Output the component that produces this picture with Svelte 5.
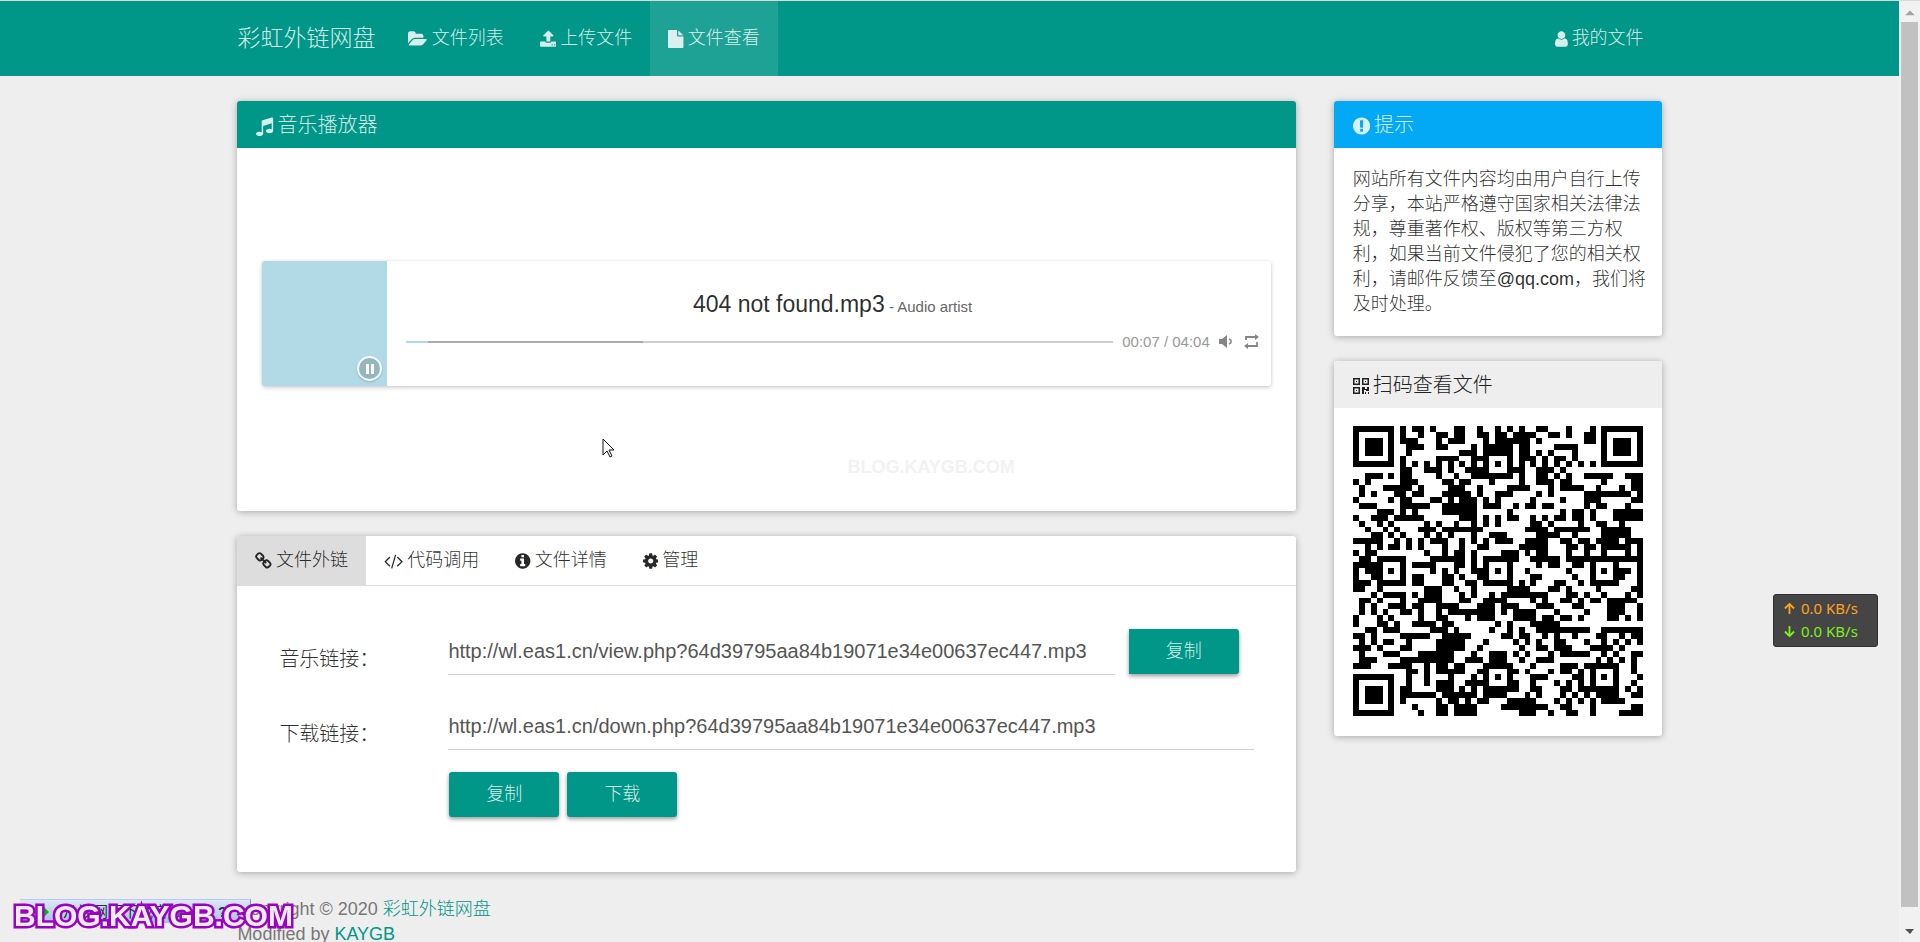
<script>
  const icons = {
    folder: { box: '0 0 1920 1792', d: 'M1879 952q0 31-31 66l-336 396q-43 51-120.5 86.5t-143.5 35.5h-1088q-34 0-60.5-13t-26.5-43q0-31 31-66l336-396q43-51 120.5-86.5t143.5-35.5h1088q34 0 60.5 13t26.5 43zm-343-344v160h-832q-94 0-197 47.5t-164 119.5l-337 396-5 6q0-4-.5-12.5t-.5-12.5v-960q0-92 66-158t158-66h320q92 0 158 66t66 158v32h544q92 0 158 66t66 158z' },
    upload: { box: '64 0 1664 1792', d: 'M1344 1472q0-26-19-45t-45-19-45 19-19 45 19 45 45 19 45-19 19-45zm256 0q0-26-19-45t-45-19-45 19-19 45 19 45 45 19 45-19 19-45zm128-224v320q0 40-28 68t-68 28h-1472q-40 0-68-28t-28-68v-320q0-40 28-68t68-28h427q21 56 70.5 92t110.5 36h256q61 0 110.5-36t70.5-92h427q40 0 68 28t28 68zm-325-648q-17 40-59 40h-256v448q0 26-19 45t-45 19h-256q-26 0-45-19t-19-45v-448h-256q-42 0-59-40-17-39 14-69l448-448q18-19 45-19t45 19l448 448q31 30 14 69z' },
    file: { box: '128 0 1536 1792', d: 'M1152 512v-472q22 14 36 28l408 408q14 14 28 36h-472zm-128 32q0 40 28 68t68 28h544v1056q0 40-28 68t-68 28h-1344q-40 0-68-28t-28-68v-1600q0-40 28-68t68-28h800v544z' },
    user: { box: '256 0 1280 1792', d: 'M1536 1399q0 109-62.5 187t-150.5 78h-854q-88 0-150.5-78t-62.5-187q0-85 8.5-160.5t31.5-152 58.5-131 94-89 134.5-34.5q131 128 313 128t313-128q76 0 134.5 34.5t94 89 58.5 131 31.5 152 8.5 160.5zm-256-887q0 159-112.5 271.5t-271.5 112.5-271.5-112.5-112.5-271.5 112.5-271.5 271.5-112.5 271.5 112.5 112.5 271.5z' },
    music: { box: '128 0 1536 1792', d: 'M1664 224v1120q0 50-34 89t-86 60.5-103.5 32-96.5 10.5-96.5-10.5-103.5-32-86-60.5-34-89 34-89 86-60.5 103.5-32 96.5-10.5q105 0 192 39v-537l-768 237v709q0 50-34 89t-86 60.5-103.5 32-96.5 10.5-96.5-10.5-103.5-32-86-60.5-34-89 34-89 86-60.5 103.5-32 96.5-10.5q105 0 192 39v-967q0-31 19-56.5t49-35.5l832-256q12-4 28-4 40 0 68 28t28 68z' },
    alert: { box: '128 0 1536 1792', d: 'M896 128q209 0 385.5 103t279.5 279.5 103 385.5-103 385.5-279.5 279.5-385.5 103-385.5-103-279.5-279.5-103-385.5 103-385.5 279.5-279.5 385.5-103zm128 1247v-190q0-14-9-23.5t-22-9.5h-192q-13 0-23 10t-10 23v190q0 13 10 23t23 10h192q13 0 22-9.5t9-23.5zm-2-344l18-621q0-12-10-18-10-8-24-8h-220q-14 0-24 8-10 6-10 18l17 621q0 10 10 17.5t24 7.5h185q14 0 23.5-7.5t10.5-17.5z' },
    info: { box: '128 0 1536 1792', d: 'M1152 1376v-160q0-14-9-23t-23-9h-96v-512q0-14-9-23t-23-9h-320q-14 0-23 9t-9 23v160q0 14 9 23t23 9h96v320h-96q-14 0-23 9t-9 23v160q0 14 9 23t23 9h448q14 0 23-9t9-23zm-128-896v-160q0-14-9-23t-23-9h-192q-14 0-23 9t-9 23v160q0 14 9 23t23 9h192q14 0 23-9t9-23zm640 416q0 209-103 385.5t-279.5 279.5-385.5 103-385.5-103-279.5-279.5-103-385.5 103-385.5 279.5-279.5 385.5-103 385.5 103 279.5 279.5 103 385.5z' },
    cog: { box: '128 0 1536 1792', d: 'M1152 896q0-106-75-181t-181-75-181 75-75 181 75 181 181 75 181-75 75-181zm512-109v222q0 12-8 23t-20 13l-185 28q-19 54-39 91 35 50 107 138 10 12 10 25t-9 23q-27 37-99 108t-94 71q-12 0-26-9l-138-108q-44 23-91 38-16 136-29 186-7 28-36 28h-222q-14 0-24.5-8.5t-11.5-21.5l-28-184q-49-16-90-37l-141 107q-10 9-25 9-14 0-25-11-126-114-165-168-7-10-7-23 0-12 8-23 15-21 51-66.5t54-70.5q-27-50-41-99l-183-27q-13-2-21-12.5t-8-23.5v-222q0-12 8-23t19-13l186-28q14-46 39-92-40-57-107-138-10-12-10-24 0-10 9-23 26-36 98.5-107.5t94.5-71.5q13 0 26 10l138 107q44-23 91-38 16-136 29-186 7-28 36-28h222q14 0 24.5 8.5t11.5 21.5l28 184q49 16 90 37l142-107q9-9 24-9 13 0 25 10 129 119 165 170 7 8 7 22 0 12-8 23-15 21-51 66.5t-54 70.5q26 50 41 98l183 28q13 2 21 12.5t8 23.5z' },
    link: { box: '64 0 1664 1792', d: 'M1520 1216q0-40-28-68l-208-208q-28-28-68-28-42 0-72 32 3 3 19 18.5t21.5 21.5 15 19 13 25.5 3.5 27.5q0 40-28 68t-68 28q-15 0-27.5-3.5t-25.5-13-19-15-21.5-21.5-18.5-19q-33 31-33 73 0 40 28 68l206 207q27 27 68 27 40 0 68-26l147-146q28-28 28-67zm-703-705q0-40-28-68l-206-207q-28-28-68-28-39 0-68 27l-147 146q-28 28-28 67 0 40 28 68l208 208q27 27 68 27 42 0 72-31-3-3-19-18.5t-21.5-21.5-15-19-13-25.5-3.5-27.5q0-40 28-68t68-28q15 0 27.5 3.5t25.5 13 19 15 21.5 21.5 18.5 19q33-31 33-73zm895 705q0 120-85 203l-147 146q-83 83-203 83-121 0-204-85l-206-207q-83-83-83-203 0-123 88-209l-88-88q-86 88-208 88-120 0-204-84l-208-208q-84-84-84-204t85-203l147-146q83-83 203-83 121 0 204 85l206 207q83 83 83 203 0 123-88 209l88 88q86-88 208-88 120 0 204 84l208 208q84 84 84 204z' },
    code: { box: '0 0 1920 1792', d: 'M617 1399l-50 50q-10 10-23 10t-23-10l-466-466q-10-10-10-23t10-23l466-466q10-10 23-10t23 10l50 50q10 10 10 23t-10 23l-393 393 393 393q10 10 10 23t-10 23zm591-1067l-373 1291q-4 13-15.500 19.500t-23.500 2.500l-62-17q-13-4-19.500-15.500t-2.500-24.500l373-1291q4-13 15.500-19.500t23.500-2.500l62 17q13 4 19.500 15.500t2.500 24.500zm657 651l-466 466q-10 10-23 10t-23-10l-50-50q-10-10-10-23t10-23l393-393-393-393q-10-10-10-23t10-23l50-50q10-10 23-10t23 10l466 466q10 10 10 23t-10 23z' }
  };

  const tabs = [
    ['link', '文件外链'],
    ['code', '代码调用'],
    ['info', '文件详情'],
    ['cog', '管理']
  ];
  let active = $state(0);

  // Dark module runs of the code's data area, one string per row.
  const rows = [
    '8,10-11,13,17-18,21,24,26,28,31-32,36,40',
    '8,11,14-15,17-18,21-22,24-25,27-30,33-34,36,39-40',
    '8-10,14,16-18,22,24-29,31,39-40',
    '9-11,14-15,20,22-26,28-29,34-37',
    '9,18-20,22-26,28-29,31,33,37',
    '8,14-17,20-22,26,28-30,32,34-35,37',
    '',
    '8-9,12-14,16,19-22,26-28,31-33,35',
    '2-4,6,8-9,14,17,20-26,28,31-32,34,36,39-43,46-48',
    '0,2,6,8-10,15-16,18-19,23,28,31-33,35-36,42,47-48',
    '1,5-9,11,16-18,21,26-29,33,35-38,41,45,47-48',
    '1,3,7-8,10-11,15-19,21,24-26,31,33,39-46,48',
    '0,6,8-9,13-14,16,18-20,22,24,30,35,39-41,47-48',
    '1-3,8-12,15-20,22-24,27,29-30,32-33,39,41-42,46',
    '4-6,8,10,15-20,26,35,37-38,40,44-48',
    '0,3-5,7-11,18-20,22,24,26-27,30,32,34-35,37-38,40,44-48',
    '1,4,6,12,14,17,20,22,24,30-31,33,38,41-42,45',
    '2,5,7,11-13,15-21,29-32,34-39,42-46',
    '3-4,6,8,12,14,16,20,23-25,31-34,37,42-46',
    '0-4,7,9,11,13-15,18,20,22,24-26,29-32,35-36,38-39,41-44,46-48',
    '2,4,7,9,11,15,18,21-22,28-32,36-37,39-40,42-46,48',
    '0,2-3,12,15,17-18,20,25-27,29,31-32,36,39,42,46,48',
    '1-2,4-8,13-18,20,22-27,30-34,36-48',
    '0-3,10-13,17-18,20,31,33-34,37-38,48',
    '0,2-3,13,15,17,20-21,29,36,45-46,48',
    '0,3,10-11,15-16,18,21,30-31,37,45,48',
    '0-2,10-11,15-16,19-20,28,30,34-35,38,48',
    '0-1,4,12-14,17,20,26-29,33-34,36,41,47-48',
    '3,5-8,10,12-14,18,20,23,25-32,36-37,39,42,46,48',
    '1-2,4,8,11-14,18-19,22-25,30,32,35-36,38,40-41,43-47',
    '1,3,7-8,10-11,14-17,21-23,25-27,31-33,37-38,43-45,48',
    '1,3,5,8-9,11,14,16-23,25,27-30,34,39,43-45,48',
    '0,4,6,11,14-15,19,21-23,27-30,32-33,35-36,38,43-44,46,48',
    '0,4-5,7,10-13,15-16,24,26,30-34',
    '2-3,5-7,13-15,17,23,26,28,31-39,42-48',
    '0-1,3,8-12,15-19,25-26,28-29,32,34,37,41-42,45,47-48',
    '1,3,5-6,9,14-18,22,27,29,31,34-35,39,42,44,46,48',
    '0-2,4,8-9,14-18,21,28,31-32,34-36,40-43,45',
    '1,5-7,11-16,20,23-25,27,29,33,35-39,42,44,47-48',
    '1-3,8-16,19-21,23-25,28,31-33,41,43,45,47',
    '0-2,6-9,12,14-15,17-18,22-26,30,35-37,39-44,47',
    '9-10,12,14-18,21-22,27,29,33,35-36,38,47',
    '9,12,16,20,30-32,37-38,48',
    '9,12,14-16,19-21,27,30,34,36,38,47',
    '8-9,14-16,18,20,22-27,30-31,35-36,38-44,46,48',
    '8-13,15-20,22-25,29,31,35,37,39,41-44,47-48',
    '8,14,16-17,19,21-22,26-30,34,36,38,40,42-45',
    '10,14-15,17-20,25-32,35-36,40,47-48',
    '11,14-15,17-20,28-30,33,36-37,40,45-48'
  ];

  const grid = rows.map((row) => {
    const line = Array(49).fill(false);
    for (const run of row ? row.split(',') : []) {
      const [a, b = a] = run.split('-').map(Number);
      for (let i = a; i <= b; i++) line[i] = true;
    }
    return line;
  });
  function ringed(cx, cy, radius) {
    for (let y = -radius; y <= radius; y++)
      for (let x = -radius; x <= radius; x++) {
        const far = Math.max(Math.abs(x), Math.abs(y));
        grid[cy + y][cx + x] = far === radius || far <= radius - 2;
      }
  }
  for (let i = 8; i < 41; i++) grid[6][i] = grid[i][6] = i % 2 === 0;
  for (const [x, y] of [[3, 3], [45, 3], [3, 45]]) ringed(x, y, 3);
  for (const [x, y] of [[24, 6], [6, 24], [24, 24], [42, 24], [24, 42], [42, 42]]) ringed(x, y, 2);
  const qrPath = grid
    .map((line, y) => line.map((on, x) => (on ? `M${x} ${y}h1v1h-1z` : '')).join(''))
    .join('');
</script>

{#snippet icon(name)}
  <svg class="icon" viewBox={icons[name].box} aria-hidden="true"><path d={icons[name].d} /></svg>
{/snippet}

<div class="window">
  <div class="page">
    <header>
      <nav class="container">
        <a class="brand" href="#home">彩虹外链网盘</a>
        <a class="item" href="#list">{@render icon('folder')}文件列表</a>
        <a class="item" href="#upload">{@render icon('upload')}上传文件</a>
        <a class="item current" href="#view">{@render icon('file')}文件查看</a>
        <a class="item mine" href="#mine">{@render icon('user')}我的文件</a>
      </nav>
    </header>

    <div class="container columns">
      <main>
        <section class="panel">
          <h3 class="teal">{@render icon('music')}音乐播放器</h3>
          <div class="stage">
            <div class="player">
              <div class="cover">
                <button class="pause" aria-label="暂停">
                  <svg viewBox="0 0 10 12" aria-hidden="true"><path d="M1 1h3v10H1zM6 1h3v10H6z" /></svg>
                </button>
              </div>
              <div class="track">
                <div class="song">404 not found.mp3<small>&nbsp;- Audio artist</small></div>
                <div class="controls">
                  <div class="bar"><i style="width:3%"></i><b style="width:30.500%"></b></div>
                  <span class="time">00:07 / 04:04</span>
                  <button class="tool" aria-label="音量">
                    <svg viewBox="0 0 15 15" aria-hidden="true"><path d="M1 5h3l5-4v13L4 10H1z" /><path d="M11 5c3 1 3 4 0 5" fill="none" stroke="currentColor" stroke-width="1.500" /></svg>
                  </button>
                  <button class="tool loop" aria-label="循环">
                    <svg viewBox="0 0 15 15" aria-hidden="true"><path d="M2 6V3h10M13 8v4H3" fill="none" stroke="currentColor" stroke-width="1.800" /><path d="M11 0l4 3-4 3zM4 9l-4 3 4 3z" /></svg>
                  </button>
                </div>
              </div>
            </div>
            <span class="faint">BLOG.KAYGB.COM</span>
          </div>
        </section>

        <section class="panel">
          <div class="tabs" role="tablist">
            {#each tabs as [name, label], i}
              <button role="tab" class:chosen={active === i} aria-selected={active === i} onclick={() => (active = i)}>{@render icon(name)}{label}</button>
            {/each}
          </div>
          <form>
            <label for="music">音乐链接：</label>
            <div class="pair">
              <input id="music" readonly value="http://wl.eas1.cn/view.php?64d39795aa84b19071e34e00637ec447.mp3" />
              <button type="button" class="action joined">复制</button>
            </div>
            <label for="down">下载链接：</label>
            <input id="down" readonly value="http://wl.eas1.cn/down.php?64d39795aa84b19071e34e00637ec447.mp3" />
            <div class="actions">
              <button type="button" class="action">复制</button>
              <button type="button" class="action">下载</button>
            </div>
          </form>
        </section>
      </main>

      <aside>
        <section class="panel">
          <h3 class="blue">{@render icon('alert')}提示</h3>
          <p>网站所有文件内容均由用户自行上传分享，本站严格遵守国家相关法律法规，尊重著作权、版权等第三方权利，如果当前文件侵犯了您的相关权利，请邮件反馈至@qq.com，我们将及时处理。</p>
        </section>
        <section class="panel">
          <h3 class="plain">
            <svg class="icon" viewBox="0 0 16 18" aria-hidden="true">
              <path fill-rule="evenodd" d="M0 1h7v7H0zM1.500 2.500v4h4v-4zM9 1h7v7H9zM10.500 2.500v4h4v-4zM0 10h7v7H0zM1.500 11.500v4h4v-4zM3 4h1v1H3zM12 4h1v1h-1zM3 13h1v1H3zM9 10h3v2h2v-2h2v4h-3v-1h-2v4H9zM12 15h1v2h-1zM15 15h1v2h-1z" />
            </svg>扫码查看文件
          </h3>
          <div class="qr">
            <svg viewBox="0 0 49 49" shape-rendering="crispEdges" role="img" aria-label="二维码"><path d={qrPath} /></svg>
          </div>
        </section>
      </aside>
    </div>

    <footer class="container">
      Copyright © 2020 <a href="#home">彩虹外链网盘</a><br />Modified by <a href="#author">KAYGB</a>
    </footer>
  </div>

  <div class="scroll" aria-hidden="true">
    <svg viewBox="0 0 21 22"><path d="M6 15l5-5 5 5z" fill="#a3a3a3" /></svg>
    <div class="thumb"></div>
    <svg class="lower" viewBox="0 0 21 35"><path d="M6 22h9l-4 5z" fill="#505050" /></svg>
  </div>
</div>

<div class="download"><i></i><span>从该网页下载音频</span><b>?</b><b>×</b></div>
<div class="stamp">BLOG.KAYGB.COM</div>

<div class="speed">
  <div class="up"><svg viewBox="0 0 12 12" aria-hidden="true"><path d="M6 12V1M1 6l5-5 5 5" /></svg>0.0 KB/s</div>
  <div class="dn"><svg viewBox="0 0 12 12" aria-hidden="true"><path d="M6 0v11M1 6l5 5 5-5" /></svg>0.0 KB/s</div>
</div>

<svg class="pointer" viewBox="0 0 13 20" aria-hidden="true"><path d="M1 1v16l4-4 3 6 2-1-3-6h5z" fill="#fff" stroke="#112" /></svg>

<style>
  :global(body) {
    margin: 0;
    background: #eee;
  }
  .window {
    display: grid;
    grid-template-columns: minmax(0, 1fr) 21px;
    height: 100vh;
    overflow: hidden;
    box-sizing: border-box;
    border-top: 1px solid #d9d9d9;
    font: 300 18px/25px 'Liberation Sans', 'Noto Sans CJK SC', sans-serif;
    color: rgba(0, 0, 0, 0.84);
  }
  .page {
    overflow: hidden;
  }
  button,
  input {
    font: inherit;
    color: inherit;
    border: 0;
    margin: 0;
    padding: 0;
    background: none;
  }
  a {
    color: #009688;
    text-decoration: none;
  }
  .icon {
    height: 18px;
    margin-right: 4px;
    fill: currentColor;
    flex: none;
  }
  .container {
    width: 75%;
    max-width: 1425px;
    margin: 0 auto;
  }
  header {
    background: #009688;
  }
  nav {
    display: flex;
    height: 75px;
  }
  nav a {
    display: flex;
    align-items: center;
    padding: 0 18px;
    color: rgba(255, 255, 255, 0.84);
  }
  .brand {
    padding: 0 15px 0 0;
    font-size: 23px;
  }
  .current {
    background: rgba(255, 255, 255, 0.12);
  }
  .mine {
    margin-left: auto;
  }
  .columns {
    display: grid;
    grid-template-columns: minmax(0, 1059fr) minmax(0, 328fr);
    column-gap: 38px;
    align-items: start;
    padding-top: 25px;
  }
  .panel {
    background: #fff;
    border-radius: 3px;
    margin-bottom: 25px;
    overflow: hidden;
    box-shadow: 0 1px 7px rgba(0, 0, 0, 0.3);
  }
  h3 {
    display: flex;
    align-items: center;
    height: 47px;
    box-sizing: border-box;
    margin: 0;
    padding: 2px 19px 0;
    font-size: 20px;
    font-weight: 300;
    color: rgba(255, 255, 255, 0.84);
  }
  h3 .icon {
    height: 20px;
  }
  .teal {
    background: #009688;
  }
  .blue {
    background: #03a9f4;
  }
  .plain {
    background: #eee;
    color: #212121;
  }
  .plain .icon {
    height: 18px;
  }
  .stage {
    position: relative;
    padding: 113px 25px 125px;
  }
  .player {
    display: flex;
    border-radius: 3px;
    overflow: hidden;
    box-shadow: 0 2px 4px rgba(0, 0, 0, 0.16), 0 0 3px rgba(0, 0, 0, 0.1);
  }
  .cover {
    display: flex;
    align-items: flex-end;
    justify-content: flex-end;
    width: 125px;
    height: 125px;
    box-sizing: border-box;
    padding: 5px;
    background: #b2dae6;
  }
  .pause {
    display: grid;
    place-items: center;
    width: 25px;
    height: 25px;
    border: 2px solid #f4fafc;
    border-radius: 50%;
    background: #95b5bf;
    box-shadow: 0 1px 2px rgba(0, 0, 0, 0.2);
  }
  .pause svg {
    width: 10px;
    height: 12px;
    fill: #fff;
  }
  .track {
    flex: 1;
    min-width: 0;
    padding: 31px 12px 0 19px;
  }
  .song {
    font-size: 23px;
    text-align: center;
  }
  .song small {
    font-size: 15px;
    color: #666;
  }
  .controls {
    display: flex;
    align-items: center;
    margin-top: 10px;
  }
  .bar {
    display: flex;
    flex: 1;
    height: 2px;
    margin-right: 9px;
    background: #cdcdcd;
  }
  .bar i {
    background: #b2dae6;
  }
  .bar b {
    background: #aaa;
  }
  .time {
    font-size: 15px;
    color: #999;
  }
  .tool {
    display: flex;
    margin-left: 8px;
    color: #858585;
  }
  .loop {
    margin-left: 11px;
  }
  .tool svg {
    width: 15px;
    height: 15px;
    fill: currentColor;
  }
  .faint {
    position: absolute;
    right: 281px;
    bottom: 31px;
    font-weight: 700;
    color: #f2f2f2;
  }
  .tabs {
    display: flex;
    border-bottom: 1px solid #ddd;
  }
  .tabs button {
    display: flex;
    align-items: center;
    height: 49px;
    padding: 0 18px;
  }
  .tabs .chosen {
    background: #ddd;
  }
  form {
    display: grid;
    grid-template-columns: 169px minmax(0, 1fr);
    padding: 43px 42px 55px;
    font-size: 20px;
  }
  label {
    padding-top: 18px;
  }
  .pair {
    display: flex;
    margin: 0 15px 29px 0;
  }
  input {
    width: 100%;
    min-width: 0;
    height: 46px;
    box-sizing: border-box;
    color: #555;
    outline: 0;
    border-bottom: 1px solid #d2d2d2;
  }
  .action {
    width: 110px;
    height: 45px;
    border-radius: 3px;
    font-size: 18px;
    color: rgba(255, 255, 255, 0.84);
    background: #009688;
    box-shadow: 0 2px 4px rgba(0, 0, 0, 0.4);
  }
  .joined {
    flex: none;
    margin-left: 14px;
    border-radius: 0 3px 3px 0;
  }
  .actions {
    display: flex;
    gap: 8px;
    grid-column: 2;
    margin: 22px 0 0 1px;
  }
  p {
    margin: 0;
    padding: 19px 15px 19px 19px;
  }
  .qr {
    padding: 18px 19px 20px;
  }
  .qr svg {
    display: block;
    width: 100%;
  }
  footer {
    color: #777;
  }
  .scroll {
    display: flex;
    flex-direction: column;
    background: #f1f1f1;
  }
  .scroll svg {
    flex: none;
    width: 21px;
    height: 21px;
  }
  .scroll .lower {
    height: 35px;
  }
  .thumb {
    flex: 1;
    margin: 0 2px;
    background: #c1c1c1;
  }
  .download {
    position: fixed;
    left: 20px;
    bottom: 19px;
    display: flex;
    align-items: center;
    gap: 9px;
    width: 231px;
    height: 24px;
    box-sizing: border-box;
    padding: 0 5px 0 24px;
    border-top: 1px solid #b9cbed;
    border-right: 1px solid #7c93bd;
    background: linear-gradient(#dbe7fb, #a9bfdf);
    font: 15px/22px 'Liberation Sans', 'Noto Sans CJK SC', sans-serif;
    color: #234;
  }
  .download i {
    border: 5px solid transparent;
    border-left-color: #0b0;
  }
  .download span {
    flex: 1;
  }
  .stamp {
    position: fixed;
    left: 14px;
    bottom: 8px;
    font: 700 30px/36px 'Liberation Sans', sans-serif;
    color: #eee;
    -webkit-text-stroke: 5px #9c00c3;
    paint-order: stroke fill;
  }
  .speed {
    position: fixed;
    right: 42px;
    top: 594px;
    width: 105px;
    box-sizing: border-box;
    padding: 2px 10px 3px;
    border: 1px solid #303030;
    border-radius: 3px;
    background: #454545;
    font: 15px/23px 'Noto Sans', sans-serif;
  }
  .speed div {
    display: flex;
    align-items: center;
    gap: 6px;
  }
  .speed svg {
    width: 11px;
    height: 11px;
    fill: none;
    stroke: currentColor;
    stroke-width: 2;
  }
  .up {
    color: #ffa21f;
  }
  .dn {
    color: #7df01d;
  }
  .pointer {
    position: fixed;
    left: 602px;
    top: 438px;
    width: 13px;
    height: 20px;
  }
</style>
